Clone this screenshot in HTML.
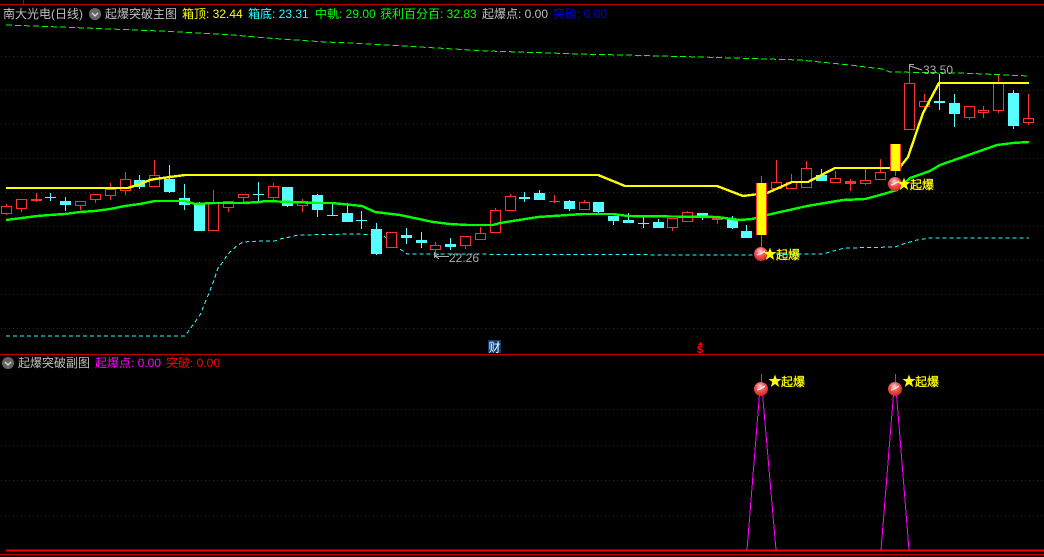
<!DOCTYPE html>
<html><head><meta charset="utf-8"><style>
html,body{margin:0;padding:0;background:#000;width:1044px;height:557px;overflow:hidden}
svg{display:block;position:absolute;left:0;top:0}
text{font-family:"Liberation Sans","WenQuanYi Zen Hei","Noto Sans CJK SC",sans-serif;font-size:12px;white-space:pre}
.c{font-family:"WenQuanYi Zen Hei","Noto Sans CJK SC",sans-serif;font-size:12px;stroke:#ff0;stroke-width:.25}
</style></head><body>
<svg width="1044" height="557" viewBox="0 0 1044 557" xmlns="http://www.w3.org/2000/svg">
<defs>
<radialGradient id="b" cx="45%" cy="32%" r="72%"><stop offset="0" stop-color="#ffd8d8"/><stop offset=".42" stop-color="#ee5c5c"/><stop offset="1" stop-color="#d41818"/></radialGradient>
<g id="ball"><circle r="7" fill="url(#b)"/><path d="M-4 1Q0 0 4-3" stroke="#ffeaea" stroke-width="1.2" fill="none"/></g>
<polygon id="star" points="0,-6.5 1.7,-2 6.5,-2 2.7,1 4.2,6 0,3 -4.2,6 -2.7,1 -6.5,-2 -1.700,-2" fill="#ff0"/>
<g id="icon"><circle r="6" fill="#666"/><path d="M-3-1L0 2L3-1" stroke="#ddd" stroke-width="1.3" fill="none"/></g>
</defs>
<g shape-rendering="crispEdges">
<path d="M0 4.500H1044M0 354.500H1044M23.500 0V4" stroke="#c00000" fill="none"/>
<path d="M1 56.500H1044M1 90.500H1044M1 124.500H1044M1 158.500H1044M1 192.500H1044M1 226.500H1044M1 260.500H1044M1 294.500H1044M1 328.500H1044M1 409.500H1044M1 445.500H1044M1 480.500H1044M1 515.500H1044" stroke="#900000" stroke-dasharray="1 3" fill="none"/>
<path d="M0 554.500H1044" stroke="#d00000"/>
<path d="M6 550.500H1044" stroke="#f00" stroke-width="2"/>

<polyline points="6,25 60,27 160,31 233,35 267,38 325,42 350,43 403,46 487,51 550,53 577,54 623,55 700,57 800,60 850,65 882,69 890,72 960,73 1029,76" fill="none" stroke="#0f0" stroke-dasharray="6 3"/>
<polyline points="6,336 185,336 200,315 213,283 218,268 223,262 227,255 232,250 238,245 243,242 260,241 275,241 280,239 290,237 298,235 353,234 383,235 393,244 400,249 407,254 730,255 823,254 837,250 845,248 895,247 903,244 917,240 930,238 1029,238" fill="none" stroke="#2ff" stroke-dasharray="4 3"/>

<path stroke="#ff3232" fill="none" d="M6.500 204V215M21.500 199V212M36.500 193V202M80.500 201V210M95.500 194V203M110.500 183V200M125.500 172V195M154.500 160V187M213.500 190V231M228.500 201V212M243.500 194V202M273.500 183V200M302.500 199V212M435.500 242V256M465.500 236V249M480.500 227V240M495.500 208V233M510.500 194V211M554.500 195V203M549 201.500H560M584.500 200V210M672.500 218V231M687.500 211V222M717.500 218V224M776.500 160V189M791.500 174V189M806.500 161V188M835.500 171V183M850.500 179V191M865.500 168V185M880.500 159V180M909.500 64V130M924.500 94V107M969.500 106V120M983.500 106V118M998.500 75V113M1028.500 94V125M761.500 176V247M895.500 171V176"/>
<g fill="#000" stroke="#ff3232">
<rect x="1.500" y="206.500" width="10" height="7"/><rect x="16.500" y="199.500" width="10" height="9"/>
<rect x="75.500" y="201.500" width="10" height="4"/><rect x="90.500" y="194.500" width="10" height="5"/>
<rect x="105.500" y="189.500" width="10" height="6"/><rect x="120.500" y="179.500" width="10" height="11"/>
<rect x="149.500" y="175.500" width="10" height="11"/><rect x="208.500" y="202.500" width="10" height="28"/>
<rect x="223.500" y="201.500" width="10" height="6"/><rect x="238.500" y="194.500" width="10" height="3"/>
<rect x="268.500" y="186.500" width="10" height="11"/><rect x="297.500" y="201.500" width="10" height="4"/>
<rect x="386.500" y="232.500" width="10" height="15"/><rect x="430.500" y="245.500" width="10" height="4"/>
<rect x="460.500" y="236.500" width="10" height="9"/><rect x="475.500" y="233.500" width="10" height="6"/>
<rect x="490.500" y="210.500" width="10" height="22"/><rect x="505.500" y="196.500" width="10" height="14"/>
<rect x="579.500" y="202.500" width="10" height="7"/><rect x="667.500" y="218.500" width="10" height="9"/>
<rect x="682.500" y="212.500" width="10" height="9"/><rect x="771.500" y="182.500" width="10" height="6"/>
<rect x="786.500" y="182.500" width="10" height="6"/><rect x="801.500" y="168.500" width="10" height="19"/>
<rect x="830.500" y="178.500" width="10" height="4"/><rect x="860.500" y="180.500" width="10" height="3"/>
<rect x="875.500" y="172.500" width="10" height="7"/><rect x="904.500" y="83.500" width="10" height="46"/>
<rect x="919.500" y="101.500" width="10" height="5"/><rect x="964.500" y="106.500" width="10" height="11"/>
<rect x="978.500" y="110.500" width="10" height="2"/><rect x="993.500" y="83.500" width="10" height="27"/>
<rect x="1023.500" y="118.500" width="10" height="4"/>
</g>
<g fill="#ff3232"><rect x="31" y="199" width="11" height="2"/><rect x="712" y="218" width="11" height="2"/><rect x="845" y="181" width="11" height="3"/></g>

<path stroke="#55ffff" fill="none" d="M50.500 193V201M45 197.500H56M65.500 197V211M139.500 175V189M169.500 165V193M184.500 184V210M199.500 202V231M258.500 182V202M253 194.500H264M287.500 187V207M317.500 194V217M332.500 204V215M327 215.500H338M347.500 203V222M361.500 211V229M356 220.500H367M376.500 223V255M406.500 228V244M421.500 232V248M450.500 238V250M524.500 192V202M539.500 190V200M569.500 200V211M598.500 202V213M613.500 216V225M628.500 213V223M643.500 217V228M638 223.500H649M658.500 219V228M702.500 213V220M732.500 216V229M746.500 225V238M821.500 169V181M939.500 74V110M954.500 94V127M1013.500 90V129"/>
<g fill="#55ffff">
<rect x="60" y="201" width="11" height="4"/><rect x="134" y="180" width="11" height="7"/>
<rect x="164" y="179" width="11" height="13"/><rect x="179" y="198" width="11" height="7"/>
<rect x="194" y="204" width="11" height="27"/><rect x="282" y="187" width="11" height="19"/>
<rect x="312" y="195" width="11" height="15"/><rect x="342" y="213" width="11" height="9"/>
<rect x="371" y="229" width="11" height="25"/><rect x="401" y="235" width="11" height="3"/>
<rect x="416" y="240" width="11" height="3"/><rect x="445" y="244" width="11" height="3"/>
<rect x="519" y="197" width="11" height="2"/><rect x="534" y="193" width="11" height="7"/>
<rect x="564" y="201" width="11" height="8"/><rect x="593" y="202" width="11" height="10"/>
<rect x="608" y="216" width="11" height="5"/><rect x="623" y="220" width="11" height="3"/>
<rect x="653" y="222" width="11" height="6"/><rect x="697" y="213" width="11" height="5"/>
<rect x="727" y="219" width="11" height="9"/><rect x="741" y="231" width="11" height="7"/>
<rect x="816" y="175" width="11" height="6"/><rect x="934" y="101" width="11" height="2"/>
<rect x="949" y="103" width="11" height="11"/><rect x="1008" y="93" width="11" height="33"/>
</g>

<polyline points="6,220 22,218 37,216 50,215 65,214 80,212 95,211 110,209 125,206 140,204 155,201 185,201 195,204 213,203 243,203 260,202 265,201 317,203 332,203 362,206 375,212 400,215 433,222 450,224 467,225 493,225 500,223 538,217 583,214 613,214 628,216 717,217 740,220 752,219 767,215 807,206 843,200 865,199 880,195 897,190 910,178 930,171 940,165 997,145 1013,143 1029,142" fill="none" stroke="#0f0" stroke-width="2.400"/>
<polyline points="6,188 128,188 140,184 150,180 155,179 170,177 185,175 598,175 625,186 717,186 743,196 767,193 792,182 808,182 835,168 890,168 900,167 908,157 923,113 939,83 1029,83" fill="none" stroke="#ff0" stroke-width="2.400"/>

<rect x="756" y="183" width="11" height="52" fill="#ff3232"/><rect x="757" y="183" width="9" height="52" fill="#ff0"/>
<rect x="890" y="144" width="11" height="27" fill="#ff3232"/><rect x="891" y="144" width="9" height="27" fill="#ff0"/>

<path stroke="#f0f" fill="none" d="M747 550L760 388M776 550L762 388M881 550L894 388M909 550L896 388"/>
<path stroke="#f0f" fill="none" d="M761.500 374V384M895.500 374V384"/>
<path stroke="#aaa" fill="none" d="M909.500 64V70M909.500 64.500H914M910 66L922 70M434.500 252V258M435 256.500H449M435 256L439 254M435 256L439 259"/>
</g>

<use href="#ball" x="761" y="254"/><use href="#star" x="770" y="254"/>
<use href="#ball" x="895" y="184"/><use href="#star" x="904" y="184"/>
<use href="#ball" x="761" y="389"/><use href="#star" x="775" y="381"/>
<use href="#ball" x="895" y="389"/><use href="#star" x="909" y="381"/>
<g fill="#ff0">
<text class="c" x="776" y="259">起爆</text><text class="c" x="910" y="189">起爆</text>
<text class="c" x="781" y="386">起爆</text><text class="c" x="915" y="386">起爆</text>
</g>

<use href="#icon" x="95" y="14"/><use href="#icon" x="8" y="363"/>
<text x="3" y="18" fill="#c0c0c0">南大光电(日线)</text>
<text x="105" y="18" fill="#c0c0c0">起爆突破主图</text>
<text x="182" y="18" fill="#ff0">箱顶: 32.44</text>
<text x="248" y="18" fill="#2ff">箱底: 23.31</text>
<text x="315" y="18" fill="#0f0">中軌: 29.00</text>
<text x="380" y="18" fill="#0f0">获利百分百: 32.83</text>
<text x="482" y="18" fill="#c0c0c0">起爆点: 0.00</text>
<text x="553" y="18" fill="#0000e0">突破: 0.00</text>
<text x="18" y="367" fill="#c0c0c0">起爆突破副图</text>
<text x="95" y="367" fill="#f0f">起爆点: 0.00</text>
<text x="166" y="367" fill="#f00">突破: 0.00</text>
<text x="923" y="74" fill="#aaa">33.50</text>
<text x="449" y="262" fill="#aaa">22.26</text>

<rect x="488" y="340" width="13" height="13" fill="#0a3c70"/>
<text x="488.500" y="351.500" fill="#fff">财</text>
<path d="M700.500 342L703 345H698Z" fill="#f00"/>
<text x="697" y="353" fill="#f00" style="font-weight:bold;font-size:11px">$</text>
</svg>
</body></html>
